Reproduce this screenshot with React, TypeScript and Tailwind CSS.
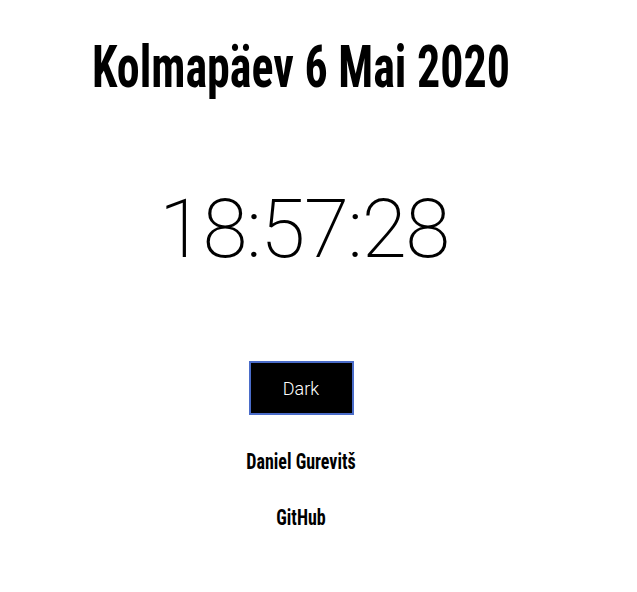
export default function App() {
  const cond = 'font-["Roboto_Condensed",sans-serif] font-bold';
  return (
    <div className="w-[602px] bg-white text-black flex flex-col items-center">
      <h1 className={`${cond} text-[46px] leading-none mt-[43px] scale-y-[1.3]`}>
        Kolmapäev 6 Mai 2020
      </h1>
      <div className="font-['Roboto',sans-serif] font-extralight text-[82px] leading-none tracking-[-1.5px] mt-[99px] ml-[6px]">
        18:57:28
      </div>
      <button className="mt-[91px] w-[105px] h-[54px] bg-black text-white border-2 border-solid border-[#4a6cc9] font-['Roboto',sans-serif] font-light text-[18px]">
        Dark
      </button>
      <p className={`${cond} text-[18px] leading-none mt-[37px] scale-y-[1.25]`}>Daniel Gurevitš</p>
      <p className={`${cond} text-[18px] leading-none mt-[38px] scale-y-[1.25]`}>GitHub</p>
    </div>
  );
}
